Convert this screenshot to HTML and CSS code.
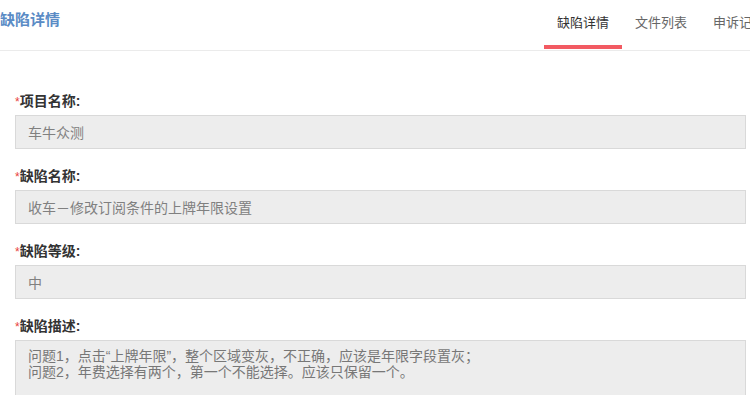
FILE: index.html
```html
<!DOCTYPE html>
<html lang="zh-CN">
<head>
    <meta charset="UTF-8">
    <meta name="viewport" content="width=device-width, initial-scale=1.0">
    <title>缺陷详情</title>
    <link rel="stylesheet" href="styles.css">
</head>
<body>
    <header class="header">
        <h1 class="page-title">缺陷详情</h1>
        <nav class="tabs">
            <a class="tab active" href="#">缺陷详情</a>
            <a class="tab" href="#">文件列表</a>
            <a class="tab" href="#">申诉记录</a>
        </nav>
    </header>

    <main class="detail-form">
        <div class="form-group">
            <label class="form-label"><span class="required">*</span>项目名称:</label>
            <input class="form-input" type="text" value="车牛众测" readonly>
        </div>
        <div class="form-group">
            <label class="form-label"><span class="required">*</span>缺陷名称:</label>
            <input class="form-input" type="text" value="收车－修改订阅条件的上牌年限设置" readonly>
        </div>
        <div class="form-group">
            <label class="form-label"><span class="required">*</span>缺陷等级:</label>
            <input class="form-input" type="text" value="中" readonly>
        </div>
        <div class="form-group">
            <label class="form-label"><span class="required">*</span>缺陷描述:</label>
            <textarea class="form-textarea" readonly>问题1，点击“上牌年限”，整个区域变灰，不正确，应该是年限字段置灰；
问题2，年费选择有两个，第一个不能选择。应该只保留一个。</textarea>
        </div>
    </main>
</body>
</html>
```

FILE: styles.css
```css
* {
    margin: 0;
    padding: 0;
    box-sizing: border-box;
}

body {
    font-family: "Liberation Sans", "Noto Sans CJK SC", sans-serif;
    background-color: #FFFFFF;
    color: #333333;
    overflow: hidden;
}

.header {
    height: 51px;
    display: flex;
    justify-content: space-between;
    border-bottom: 1px solid #EBEBEB;
    overflow: hidden;
}

.page-title {
    font-size: 15px;
    font-weight: bold;
    color: #5A8BC5;
    line-height: 20px;
    padding-top: 10px;
}

.tabs {
    display: flex;
    flex-shrink: 0;
    margin-right: -28px;
}

.tab {
    height: 49px;
    padding: 0 13px;
    font-size: 13px;
    line-height: 45px;
    color: #666666;
    text-decoration: none;
    border-bottom: 4px solid transparent;
}

.tab.active {
    color: #333333;
    border-bottom-color: #F25A62;
}

.detail-form {
    padding: 39px 4px 0 15px;
}

.form-group {
    display: flex;
    flex-direction: column;
    margin-bottom: 16px;
}

.form-label {
    height: 20px;
    font-size: 14px;
    font-weight: bold;
    line-height: 22px;
    color: #333333;
    margin-bottom: 5px;
}

.required {
    color: #E8443B;
    font-weight: normal;
    font-size: 12px;
    line-height: 1;
}

.form-input,
.form-textarea {
    width: 100%;
    background: #EDEDED;
    border: 1px solid #D9D9D9;
    font-family: "Liberation Sans", "Noto Sans CJK SC", sans-serif;
    font-size: 14px;
    color: #808080;
    outline: none;
}

.form-input {
    height: 34px;
    padding: 0 12px;
}

.form-textarea {
    height: 90px;
    padding: 7px 12px;
    line-height: 16px;
    resize: none;
    color: #777777;
}
```
